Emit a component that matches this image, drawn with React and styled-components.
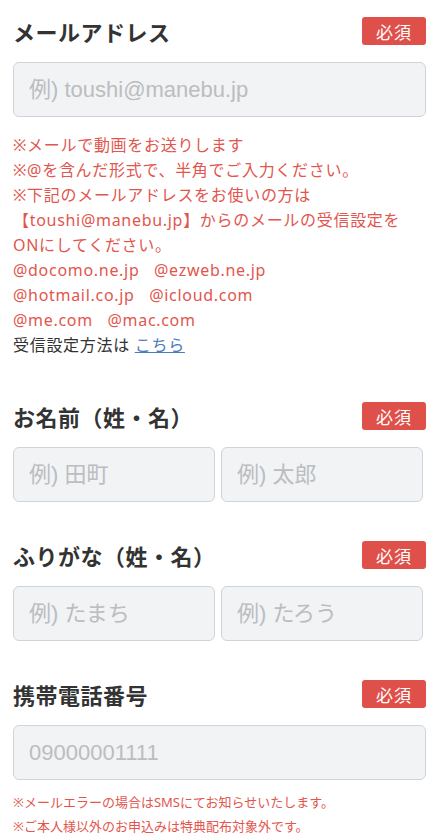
import React from 'react';
import styled, { createGlobalStyle } from 'styled-components';

const GlobalStyle = createGlobalStyle`
  body {
    margin: 0;
    background: #fff;
    font-family: "Noto Sans", "Noto Sans CJK JP", sans-serif;
    color: #333;
  }
`;

const Form = styled.form`
  padding: 17px 6px 0 13px;
`;

const Section = styled.section`
  margin-bottom: ${props => props.last ? '0' : '39px'};
`;

const Header = styled.div`
  display: flex;
  align-items: center;
  justify-content: space-between;
  height: 28px;
  margin-bottom: 17px;
`;

const Heading = styled.h2`
  margin: 0;
  font-size: 22px;
  letter-spacing: 0.5px;
  font-weight: 700;
  color: #333;
`;

const Badge = styled.span`
  display: inline-flex;
  align-items: center;
  justify-content: center;
  width: 64px;
  height: 28px;
  border-radius: 3px;
  background: #e0504a;
  color: #fff;
  font-size: 17px;
  letter-spacing: 1px;
`;

const Row = styled.div`
  display: flex;
  gap: 6px;
  padding-right: 3px;
`;

const Input = styled.input`
  box-sizing: border-box;
  width: ${props => props.half ? '202px' : '100%'};
  height: 55px;
  padding: 0 15px;
  border: 1px solid #ced4da;
  border-radius: 6px;
  background: #f1f3f5;
  font-family: "Liberation Sans", "Noto Sans CJK JP", sans-serif;
  font-size: 22px;
  color: #333;
  outline: none;
  &::placeholder {
    color: #bbbdbf;
  }
`;

const Notes = styled.div`
  margin-top: 16px;
  padding-bottom: 5px;
  font-size: 16px;
  letter-spacing: 0.7px;
  line-height: 25px;
  color: #e2564e;
`;

const Plain = styled.div`
  color: #333;
`;

const Link = styled.a`
  color: #4a7cc0;
  text-decoration: underline;
`;

const SmallNotes = styled.div`
  margin-top: 10px;
  font-size: 13px;
  line-height: 24px;
  color: #e2564e;
`;

const Field = ({ title }) => (
  <Header>
    <Heading>{title}</Heading>
    <Badge>必須</Badge>
  </Header>
);

export default function App() {
  return (
    <>
      <GlobalStyle />
      <Form>
        <Section>
          <Field title="メールアドレス" />
          <Input placeholder="例) toushi@manebu.jp" />
          <Notes>
            <div>※メールで動画をお送りします</div>
            <div>※@を含んだ形式で、半角でご入力ください。</div>
            <div>※下記のメールアドレスをお使いの方は</div>
            <div>【toushi@manebu.jp】からのメールの受信設定を</div>
            <div>ONにしてください。</div>
            <div>@docomo.ne.jp&nbsp;&nbsp;&nbsp;@ezweb.ne.jp</div>
            <div>@hotmail.co.jp&nbsp;&nbsp;&nbsp;@icloud.com</div>
            <div>@me.com&nbsp;&nbsp;&nbsp;@mac.com</div>
            <Plain>受信設定方法は <Link href="#">こちら</Link></Plain>
          </Notes>
        </Section>
        <Section>
          <Field title="お名前（姓・名）" />
          <Row>
            <Input half placeholder="例) 田町" />
            <Input half placeholder="例) 太郎" />
          </Row>
        </Section>
        <Section>
          <Field title="ふりがな（姓・名）" />
          <Row>
            <Input half placeholder="例) たまち" />
            <Input half placeholder="例) たろう" />
          </Row>
        </Section>
        <Section last>
          <Field title="携帯電話番号" />
          <Input placeholder="09000001111" />
          <SmallNotes>
            <div>※メールエラーの場合はSMSにてお知らせいたします。</div>
            <div>※ご本人様以外のお申込みは特典配布対象外です。</div>
          </SmallNotes>
        </Section>
      </Form>
    </>
  );
}
